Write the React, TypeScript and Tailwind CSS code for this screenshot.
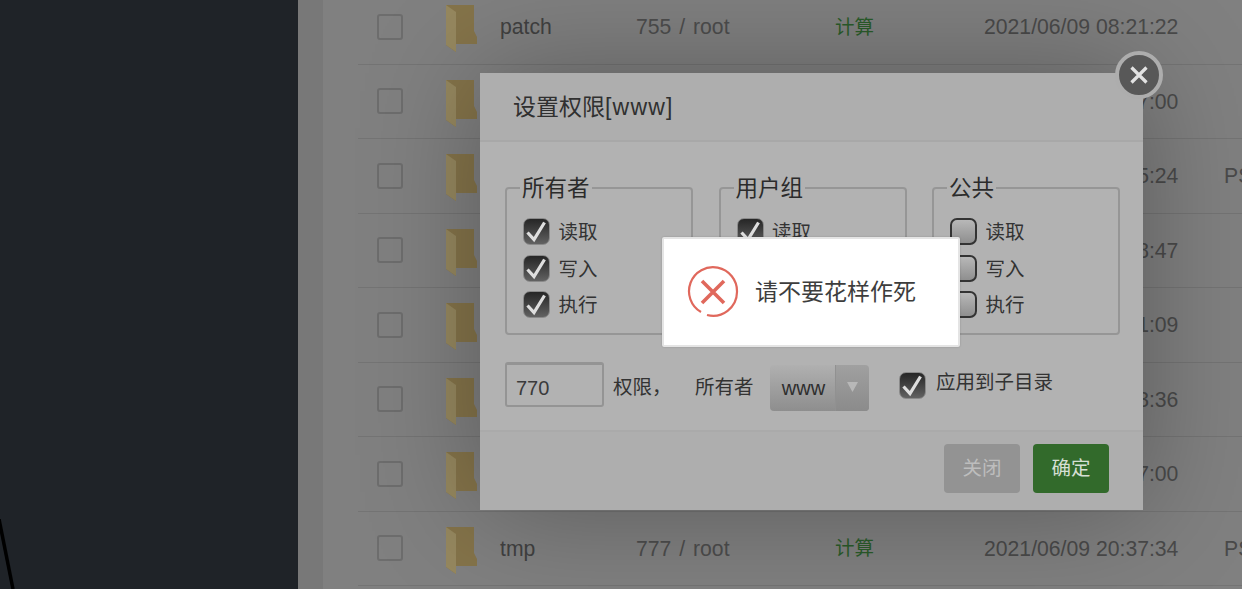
import React from "react";

const sans = '"Liberation Sans","Noto Sans CJK SC",sans-serif';

const rows = [
  ["patch", "755 / root", "计算", "2021/06/09 08:21:22", ""],
  ["", "", "", "2021/06/09 08:27:00", ""],
  ["", "", "", "2021/06/09 08:25:24", "PS"],
  ["", "", "", "2021/06/09 08:28:47", ""],
  ["", "", "", "2021/06/09 08:21:09", ""],
  ["", "", "", "2021/06/09 08:23:36", ""],
  ["", "", "", "2021/06/09 08:27:00", ""],
  ["tmp", "777 / root", "计算", "2021/06/09 20:37:34", "PS"],
];

function Folder() {
  return (
    <svg width="31" height="47" viewBox="0 0 31 47" className="shrink-0">
      <path d="M0 0 H28 V26 L31 32 V39 H10 V47 L0 40 Z" fill="#85744a" />
      <path d="M0 0 L10 7 V47 L0 40 Z" fill="#96885f" />
    </svg>
  );
}

function Row({ r }: { r: string[] }) {
  return (
    <div className="relative flex h-[74.5px] shrink-0 items-center border-b border-[#747474]">
      <div className="ml-[19px] h-[26px] w-[26px] shrink-0 rounded-[3px] border-2 border-[#6d6d6d]" />
      <div className="ml-[43px] mt-[4px] w-[54px] shrink-0"><Folder /></div>
      <div className="mt-[1px] w-[136px] shrink-0 text-[#414141]">{r[0]}</div>
      <div className="mt-[1px] w-[199px] shrink-0 text-[#4d4d4d] [word-spacing:2px]">{r[1]}</div>
      <div className="mt-[1px] w-[149px] shrink-0 text-[19.5px] text-[#2a5c2a]">{r[2]}</div>
      <div className="mt-[1px] w-[240px] shrink-0 whitespace-nowrap text-[#4a4a4a]">{r[3]}</div>
      <div className="mt-[1px] text-[#4a4a4a]">{r[4]}</div>
    </div>
  );
}

function Check({ on }: { on: boolean }) {
  return on ? (
    <span className="block h-[27px] w-[27px] shrink-0 overflow-hidden rounded-[7px] border border-[#8a8a8a] bg-gradient-to-b from-[#262626] to-[#626262]">
      <svg width="25" height="25" viewBox="0 0 25 25" className="block">
        <path d="M3.5 13.5 L10 20.5 L20.5 3.5" fill="none" stroke="#dedede" strokeWidth="3.2" />
      </svg>
    </span>
  ) : (
    <span className="block h-[27px] w-[27px] shrink-0 rounded-[7px] border-2 border-[#333333] bg-gradient-to-b from-[#b8b8b8] to-[#8f8f8f]" />
  );
}

function Group({ title, on, mr }: { title: string; on: boolean; mr: string }) {
  return (
    <div className={`relative h-[148px] w-[188px] shrink-0 rounded-[4px] border-2 border-[#969696] ${mr} pl-[16px] pt-[29px]`}>
      <span className="absolute -top-[15px] left-[13px] bg-[#b2b2b2] px-[2px] text-[22.5px] leading-[30px] text-[#2b2b2b]">
        {title}
      </span>
      {["读取", "写入", "执行"].map((t) => (
        <div key={t} className="mb-[9.5px] flex h-[27px] items-center gap-[8.5px] text-[19.5px] leading-[27px] text-[#333333]">
          <Check on={on} />
          <span className="mt-[2px]">{t}</span>
        </div>
      ))}
    </div>
  );
}

export default function App() {
  return (
    <div className="relative flex h-[589px] w-[1242px] overflow-hidden text-[21.2px]" style={{ fontFamily: sans }}>
      <div className="relative w-[298px] shrink-0 overflow-hidden bg-[#1f2328]">
        <svg className="absolute bottom-0 left-0" width="20" height="70" viewBox="0 0 20 70">
          <path d="M-1 0 L13 70" stroke="#000000" strokeWidth="3.5" fill="none" />
        </svg>
      </div>
      <div className="w-[25px] shrink-0 bg-[#787878]" />
      <div className="-mt-[10px] flex min-w-0 flex-1 flex-col overflow-hidden bg-[#808080] pl-[35px]">
        {rows.map((r, i) => (
          <Row key={i} r={r} />
        ))}
      </div>

      <div className="absolute left-[480px] top-[73px] flex h-[437px] w-[663px] flex-col bg-[#b2b2b2] shadow-[0_0_110px_rgba(0,0,0,0.3)]">
        <div className="flex h-[69px] shrink-0 items-center border-b-2 border-[#a8a8a8] bg-[#aeaeae] pb-[2px] pl-[33px] text-[23px] text-[#303030]">
          <span className="mt-[4px]">设置权限<span className="tracking-[1.2px]">[www]</span></span>
        </div>
        <div className="flex flex-1 flex-col pl-[25px] pt-[45px]">
          <div className="flex">
            <Group title="所有者" on={true} mr="mr-[25.5px]" />
            <Group title="用户组" on={true} mr="mr-[25.5px]" />
            <Group title="公共" on={false} mr="" />
          </div>
          <div className="mt-[26.5px] flex items-start">
            <div className="h-[45px] w-[99px] rounded-[3px] border-2 border-t-[3px] border-[#949494] pl-[9px] pt-[8px] text-[20px] leading-[30px] text-[#3b3b3b]">770</div>
            <span className="ml-[9px] mt-[12px] w-[82px] text-[19.5px] leading-[26px] text-[#333333]">权限，</span>
            <span className="mt-[12px] w-[75px] text-[19.5px] leading-[26px] text-[#333333]">所有者</span>
            <div className="mt-[3px] flex h-[46px] w-[99px] overflow-hidden rounded-[4px] bg-gradient-to-b from-[#b0b0b0] to-[#8e8e8e]">
              <span className="flex w-[65px] items-center justify-center pl-[2px] text-[20px] text-[#2e2e2e]">www</span>
              <span className="flex flex-1 items-center justify-center border-l border-[#919191] bg-gradient-to-b from-[#a0a0a0] to-[#8b8b8b] pb-[2px]">
                <svg width="11" height="10" viewBox="0 0 11 10"><path d="M0 0 H11 L5.5 10 Z" fill="#b8b8b8" /></svg>
              </span>
            </div>
            <div className="ml-[30px] mt-[10px] flex items-start gap-[10px] text-[19.5px] leading-[26px] text-[#333333]">
              <Check on={true} />
              <span className="-mt-[3px]">应用到子目录</span>
            </div>
          </div>
        </div>
        <div className="flex h-[80px] shrink-0 items-start justify-end gap-[13px] border-t-2 border-[#aaaaaa] bg-[#aeaeae] pr-[34px] pt-[12px]">
          <div className="flex h-[49px] w-[76px] items-center justify-center rounded-[4px] bg-[#939393] text-[19.5px] text-[#bdbdbd]">关闭</div>
          <div className="flex h-[49px] w-[76px] items-center justify-center rounded-[4px] bg-[#326a2b] text-[19.5px] text-[#d5dfd3]">确定</div>
        </div>
      </div>

      <div className="absolute left-[1115px] top-[51px] flex h-[48px] w-[48px] items-center justify-center rounded-full border-[4px] border-[#adadad] bg-[#585858]">
        <svg width="20" height="20" viewBox="0 0 20 20">
          <path d="M2.5 2.5 L17.5 17.5 M17.5 2.5 L2.5 17.5" stroke="#e2e2e2" strokeWidth="3.2" />
        </svg>
      </div>

      <div className="absolute left-[662px] top-[237px] flex h-[110px] w-[298px] items-center rounded-[2px] border-2 border-[#e4e4e4] bg-white pl-[23px] shadow-[0_0_2px_rgba(0,0,0,0.2)]">
        <svg width="52" height="52" viewBox="0 0 52 52" className="shrink-0">
          <path d="M14 46 A24 24 0 1 1 50 26 A24 24 0 0 1 20 49" fill="none" stroke="#e0685c" strokeWidth="2.2" />
          <path d="M15 15 L37 37 M37 15 L15 37" stroke="#e0685c" strokeWidth="3.6" />
        </svg>
        <span className="ml-[16px] text-[23px] text-[#3d3d3d]">请不要花样作死</span>
      </div>
    </div>
  );
}
